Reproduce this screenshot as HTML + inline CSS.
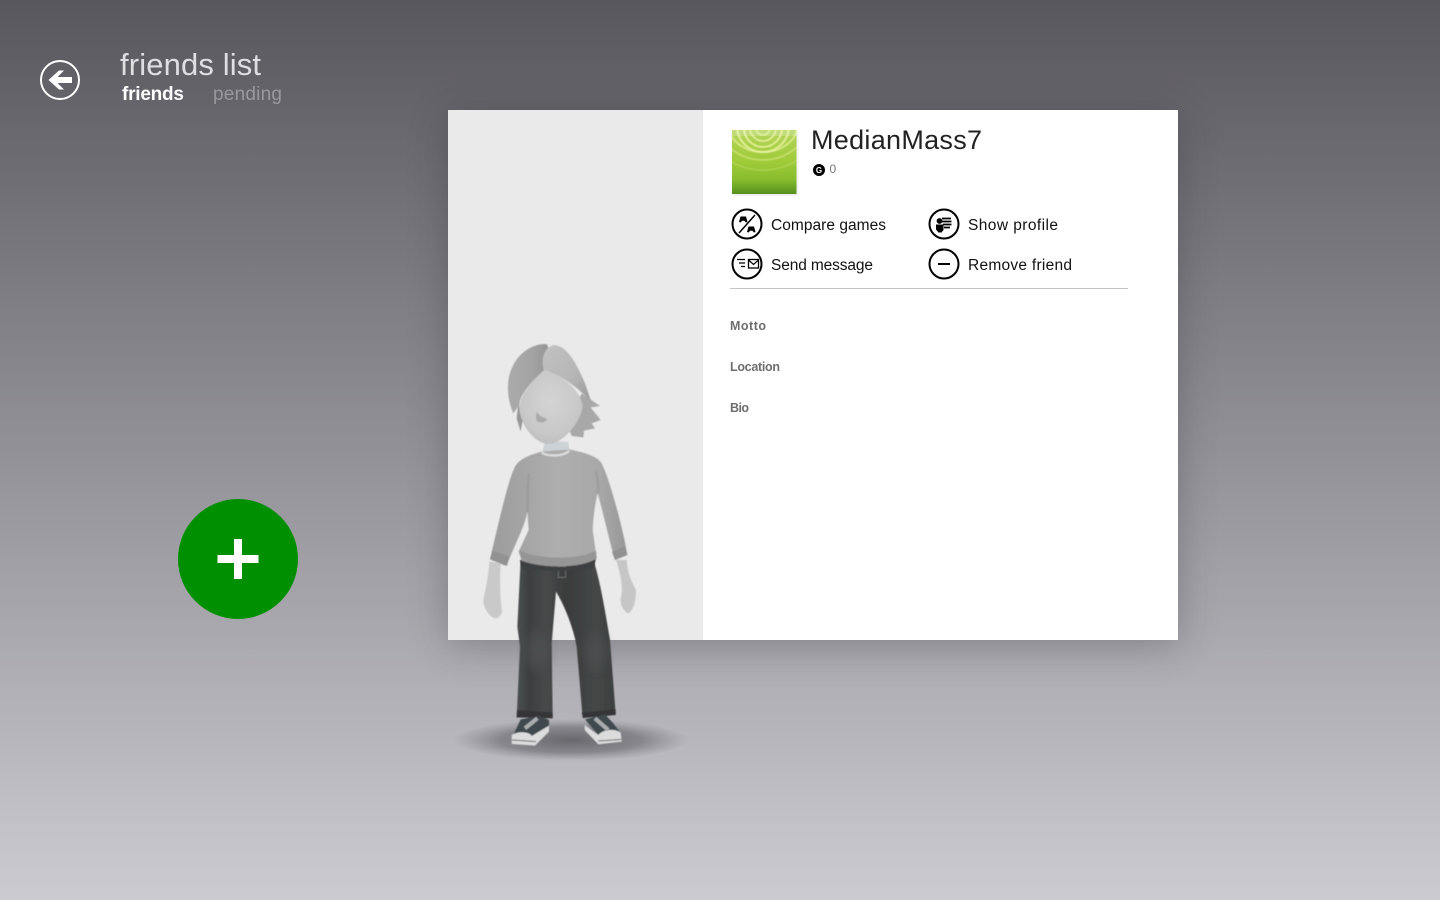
<!DOCTYPE html>
<html><head><meta charset="utf-8"><title>friends list</title>
<style>
html,body{margin:0;padding:0;width:1440px;height:900px;overflow:hidden}
body{background:linear-gradient(180deg,#58575d 0%,#cccbd1 100%)}
#c{position:absolute;left:448px;top:110px;width:730px;height:530px;background:#fff;box-shadow:0 5px 36px rgba(40,40,45,.3)}
#l{position:absolute;left:0;top:0;width:255px;height:530px;background:#eaeaea}
svg{position:absolute;left:0;top:0}
text{font-family:"Liberation Sans",sans-serif}
</style></head><body>
<div id="c"><div id="l"></div></div>
<svg width="1440" height="900" viewBox="0 0 1440 900" xmlns="http://www.w3.org/2000/svg">
<defs>
<radialGradient id="sh"><stop offset="0" stop-color="#5a5a5f" stop-opacity=".85"/><stop offset=".6" stop-color="#66666b" stop-opacity=".6"/><stop offset="1" stop-color="#77777c" stop-opacity="0"/></radialGradient>
<linearGradient id="tile" x1="0" y1="0" x2="0" y2="1"><stop offset="0" stop-color="#b4d45c"/><stop offset=".5" stop-color="#9fcb38"/><stop offset=".78" stop-color="#86bc2d"/><stop offset="1" stop-color="#568f1c"/></linearGradient>
<linearGradient id="sw" x1="0" y1="0" x2="1" y2="0"><stop offset="0" stop-color="#9c9c9c"/><stop offset=".2" stop-color="#a3a3a3"/><stop offset=".5" stop-color="#aeaeae"/><stop offset=".8" stop-color="#a8a8a8"/><stop offset="1" stop-color="#989898"/></linearGradient>
<linearGradient id="hl" x1="0" y1="0" x2="1" y2="0"><stop offset="0" stop-color="#aaaaab"/><stop offset=".6" stop-color="#a4a4a5"/><stop offset="1" stop-color="#959596"/></linearGradient>
<linearGradient id="hr" x1="0" y1="0" x2="1" y2="1"><stop offset="0" stop-color="#c2c2c3"/><stop offset=".6" stop-color="#b6b6b7"/><stop offset="1" stop-color="#9a9a9b"/></linearGradient>
<radialGradient id="fc" cx=".5" cy=".42" r=".65"><stop offset="0" stop-color="#d4d4d4"/><stop offset=".7" stop-color="#c8c8c8"/><stop offset="1" stop-color="#bababb"/></radialGradient>
<linearGradient id="jn" x1="0" y1="0" x2="1" y2="0"><stop offset="0" stop-color="#4c5254"/><stop offset=".12" stop-color="#3d3f40"/><stop offset=".3" stop-color="#47494a"/><stop offset=".5" stop-color="#3a3c3d"/><stop offset=".8" stop-color="#454747"/><stop offset="1" stop-color="#3c3f3f"/></linearGradient>
<filter id="b1"><feGaussianBlur stdDeviation="1.5"/></filter>
<filter id="b2"><feGaussianBlur stdDeviation=".45"/></filter>
<filter id="av" x="-5%" y="-5%" width="110%" height="110%"><feGaussianBlur stdDeviation="1.6"/></filter>
<filter id="av2" x="-60%" y="-60%" width="220%" height="220%"><feGaussianBlur stdDeviation="16"/></filter>
<clipPath id="tc"><rect x="732" y="130" width="65" height="64"/></clipPath>
</defs>

<!-- header -->
<circle cx="60" cy="80" r="19" fill="none" stroke="#fff" stroke-width="2"/>
<path d="M48.500 80 L59 70.500 H64 L57.500 77 H72 V83 H57.500 L64 89.500 H59 Z" fill="#fff"/>
<text x="120" y="75" font-size="31" fill="#dfdfe3" textLength="141" lengthAdjust="spacing">friends list</text>
<text x="122" y="100" font-size="19" font-weight="700" fill="#fff" textLength="62" lengthAdjust="spacing">friends</text>
<text x="213" y="100" font-size="19" fill="#99989d" textLength="69" lengthAdjust="spacing">pending</text>

<!-- add -->
<circle cx="238" cy="559" r="60" fill="#008f00"/>
<path d="M234 539H242V555H258.500V563H242V579H234V563H217.500V555H234Z" fill="#fff"/>

<!-- tile -->
<rect x="733" y="132" width="64" height="63" fill="#000" opacity=".12" filter="url(#b1)"/>
<rect x="732" y="130" width="64.500" height="64" fill="url(#tile)"/>
<g clip-path="url(#tc)">
<g fill="none" stroke="#eaf5a0" filter="url(#b2)">
<circle cx="763" cy="128" r="7" stroke-width="1.500" stroke-opacity=".8"/><circle cx="763" cy="128" r="13" stroke-width="1.800" stroke-opacity=".8"/><circle cx="763" cy="128" r="19" stroke-width="2" stroke-opacity=".85"/><circle cx="763" cy="126" r="26" stroke-width="2.200" stroke-opacity=".8"/><ellipse cx="763" cy="124" rx="35" ry="28" stroke-width="2" stroke-opacity=".65"/><ellipse cx="763" cy="122" rx="45" ry="38" stroke-width="1.800" stroke-opacity=".45"/><ellipse cx="763" cy="116" rx="60" ry="54" stroke-width="1.600" stroke-opacity=".25"/>
</g>
<rect x="732" y="130" width="65" height="6" fill="#fff" fill-opacity=".2"/>
</g>

<!-- name -->
<text x="811" y="149" font-size="27" fill="#222" textLength="171" lengthAdjust="spacing">MedianMass7</text>
<circle cx="819" cy="170" r="6" fill="#000"/>
<text x="819" y="173" font-size="8" font-weight="700" fill="#fff" text-anchor="middle">G</text>
<text x="829.500" y="173" font-size="12" fill="#777" textLength="7" lengthAdjust="spacing">0</text>

<!-- action icons -->
<g fill="none" stroke="#000" stroke-width="2">
<circle cx="747" cy="224" r="14.500"/><circle cx="944" cy="224" r="14.500"/><circle cx="747" cy="264" r="14.500"/><circle cx="944" cy="264" r="14.500"/>
<path d="M739 233L755 215" stroke-width="1.500"/>
<path d="M938 264H950"/>
<path d="M737 259.500H745M739 263H745M741 266.500H745" stroke-width="1.200"/>
<rect x="748.500" y="259.500" width="10" height="8.500" stroke-width="1.300"/>
<path d="M748.500 260L753.500 264.500L758.500 260" stroke-width="1.200"/>
<path d="M942 218.500H951M942 221.500H951.500M943 224.500H951.500M944 227.500H950" stroke-width="1.700"/>
</g>
<path d="M739 222L740.500 216.500H746L747.500 222 745.800 222.500 744.500 220.800H742L740.700 222.500Z" fill="#000"/>
<path d="M747 232L748.500 226.500H754L755.500 232 753.800 232.500 752.500 230.800H750L748.700 232.500Z" fill="#000"/>
<circle cx="939.500" cy="221" r="2.900" fill="#000"/>
<path d="M936 224.500H943.500V230L941.500 232.500H938.500L936 229.500Z" fill="#000"/>

<g font-size="15.500" fill="#111">
<text x="771" y="230" textLength="115" lengthAdjust="spacing">Compare games</text>
<text x="968" y="230" textLength="90" lengthAdjust="spacing">Show profile</text>
<text x="771" y="270" textLength="102" lengthAdjust="spacing">Send message</text>
<text x="968" y="270" textLength="104" lengthAdjust="spacing">Remove friend</text>
</g>
<rect x="730" y="288" width="398" height="1" fill="#c4c4c4"/>
<g font-size="12.500" font-weight="700" fill="#6e6e6e">
<text x="730" y="330" textLength="36" lengthAdjust="spacing">Motto</text>
<text x="730" y="371" textLength="50" lengthAdjust="spacing">Location</text>
<text x="730" y="412" textLength="19" lengthAdjust="spacing">Bio</text>
</g>

<!-- avatar shadow -->
<ellipse cx="571" cy="740" rx="118" ry="21" fill="url(#sh)"/>

<!-- avatar lower -->
<g transform="translate(450 560) scale(.33333)" filter="url(#av)">
<path d="M118 5L152 10C150 40 150 80 152 115L156 155C150 172 140 180 128 172 115 165 102 145 100 125 102 100 112 80 118 5Z" fill="#c9c9ca"/>
<path d="M498 0L530 0C532 40 545 65 558 90 558 120 552 150 535 160 522 155 510 135 512 115 520 95 515 50 498 0Z" fill="#c6c6c7"/>
<path d="M212 0H430C450 60 465 150 480 240L497 462 398 474 380 260C370 200 340 130 318 95L305 250 308 472 200 472 210 260 202 200Z" fill="url(#jn)"/>
<ellipse cx="262" cy="270" rx="30" ry="60" fill="#55585a" opacity=".55" filter="url(#av2)"/>
<ellipse cx="438" cy="275" rx="28" ry="50" fill="#55585a" opacity=".5" filter="url(#av2)"/>
<path d="M201 450L308 458V475L200 472ZM395 458L497 448V465L400 474Z" fill="#343637"/>
<path d="M325 20H347V52H325Z" fill="none" stroke="#6b6d6d" stroke-width="3"/>
<path d="M212 478L268 468 297 480V510L245 530 190 525Z" fill="#3f4a4e"/>
<path d="M185 525C205 512 240 515 245 528L297 497V515L262 550 255 557 185 552Z" fill="#dcdcdc"/>
<path d="M225 505L262 475" stroke="#a9adae" stroke-width="12"/>
<path d="M186 540L258 545" stroke="#666" stroke-width="3"/>
<path d="M405 478L465 463 490 490 512 520 445 525Z" fill="#3f4a4e"/>
<path d="M404 495L445 525C460 507 495 505 512 518L516 545 445 553 404 510Z" fill="#dcdcdc"/>
<path d="M435 475L475 510" stroke="#a9adae" stroke-width="12"/>
<path d="M445 543L515 538" stroke="#666" stroke-width="3"/>
</g>

<!-- avatar upper -->
<g transform="translate(470 330) scale(.33333)" filter="url(#av)">
<path d="M145 220L140 265 152 305 158 270Z" fill="#979799"/>
<path d="M335 190L390 228 362 232 392 270 365 280 375 295 342 302 340 322 305 318 290 280Z" fill="#a8a8a9"/>
<path d="M225 335H295L300 375H215Z" fill="#ccd2d5"/>
<path d="M150 690C215 720 330 720 378 685L372 712C320 725 210 725 155 715Z" fill="#3e4041"/>
<path d="M215 365C180 375 150 385 135 410 115 450 90 560 60 688L110 708C135 640 165 590 172 545L176 600 146 665 155 692C220 716 330 716 380 685L368 600C370 560 375 520 383 490 400 550 420 640 435 690L472 675C460 600 420 450 395 400 380 375 330 365 298 358Z" fill="url(#sw)"/>
<path d="M215 368C235 380 280 380 298 362" fill="none" stroke="#dcdcdc" stroke-width="7"/>
<path d="M148 660C200 690 330 690 378 662L380 685C330 716 220 716 155 692Z" fill="#969696"/>
<path d="M60 688L110 708 118 680 68 662ZM435 690L472 675 462 650 426 666Z" fill="#929293"/>
<path d="M178 430C170 470 175 520 172 545" fill="none" stroke="#8a8a8a" stroke-width="8" opacity=".35"/>
<path d="M378 425C385 450 385 470 383 490" fill="none" stroke="#8a8a8a" stroke-width="8" opacity=".35"/>
<path d="M222 120C190 150 150 190 148 235 150 280 190 340 235 342 280 340 330 280 338 230 335 190 290 140 222 120Z" fill="url(#fc)"/>
<path d="M200 245C198 258 195 270 205 276 215 280 226 276 232 268 222 262 208 260 200 245Z" fill="#aaaaab"/>
<path d="M130 250C112 210 105 150 130 105 150 65 190 42 225 42 250 45 215 90 222 120 190 150 150 190 148 225Z" fill="url(#hl)"/>
<path d="M222 120C212 90 220 55 250 45 290 45 320 100 345 160L362 210C340 195 300 145 222 120Z" fill="url(#hr)"/>
</g>
</svg>
</body></html>
